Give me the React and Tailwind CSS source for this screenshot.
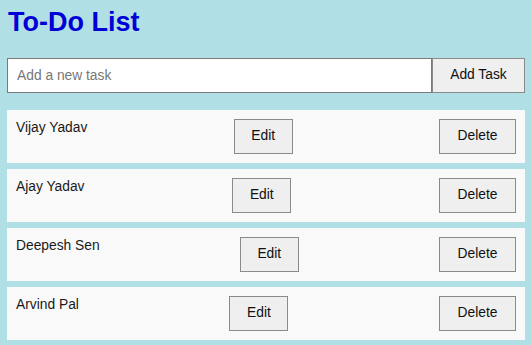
import React from "react";

const tasks = ["Vijay Yadav", "Ajay Yadav", "Deepesh Sen", "Arvind Pal"];

export default function App() {
  return (
    <div className="min-h-[345px] bg-[#b0e0e6] pl-[7px] pr-[6px] pt-[7px] font-['Liberation_Sans',Arial,sans-serif] text-[13.8px] text-[#1a1a1a]">
      {/* Title */}
      <h1 className="text-[27px] font-bold leading-[31px] text-[#0000d6] pl-px">To-Do List</h1>

      {/* Add task */}
      <div className="flex mt-[20px]">
        <input
          type="text"
          placeholder="Add a new task"
          className="flex-1 h-[35px] bg-white border border-[#7a7a7a] px-[9px] outline-none placeholder:text-[#777]"
        />
        <button className="h-[35px] w-[93px] bg-[#efefef] border border-[#8a8a8a] text-[#111]">
          Add Task
        </button>
      </div>

      {/* Tasks */}
      <ul className="mt-[17px]">
        {tasks.map((t) => (
          <li key={t} className="flex justify-between bg-[#f9f9f9] p-[9px] mb-[6px]">
            <span className="leading-[17px]">{t}</span>
            <button className="h-[35px] w-[59px] bg-[#efefef] border border-[#8a8a8a] text-[#111]">Edit</button>
            <button className="h-[35px] w-[77px] bg-[#efefef] border border-[#8a8a8a] text-[#111]">Delete</button>
          </li>
        ))}
      </ul>
    </div>
  );
}
